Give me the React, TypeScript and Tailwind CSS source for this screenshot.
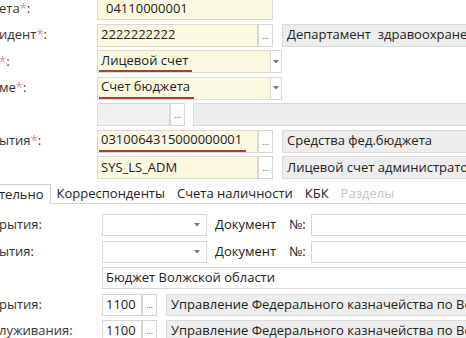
import React from "react"

const font = { fontFamily: '"Open Sans", "Noto Sans", sans-serif' }

function Dots() {
  return (
    <div className="w-[15px] h-full shrink-0 bg-white border border-[#d6d6d6] flex items-end justify-center pb-[6px]">
      <span className="text-[9px] leading-none text-[#555]">…</span>
    </div>
  )
}

function Arrow() {
  return (
    <svg width="6" height="4" viewBox="0 0 6 4">
      <path d="M0 0 L6 0 L3 3.5 Z" fill="#777" />
    </svg>
  )
}

function Label({ text, req }: { text: string; req?: boolean }) {
  return (
    <div className="whitespace-nowrap text-[#333] -ml-[1px]">
      {text}
      {req && <span className="text-[#e98a8a]">*</span>}
      {text !== "" || req ? ":" : ""}
    </div>
  )
}

function Red({ children }: { children: React.ReactNode }) {
  return <span className="border-b-2 border-[#b23a3a] -ml-[2px] pl-[2px] pr-[4px]">{children}</span>
}

const yellow = "bg-[#fcf9e1] border border-[#dadad0] h-full flex items-center whitespace-nowrap overflow-hidden"
const grey = "bg-[#ededed] border border-[#dadada] h-full flex items-center whitespace-nowrap overflow-hidden"

function TopRow({ label, children }: { label: React.ReactNode; children: React.ReactNode }) {
  return (
    <div className="flex items-center h-[23px]">
      <div className="w-[97px] shrink-0">{label}</div>
      <div className="flex items-center h-full flex-1 min-w-0">{children}</div>
    </div>
  )
}

function BotRow({ label, children }: { label: React.ReactNode; children: React.ReactNode }) {
  return (
    <div className="flex items-center h-[22px]">
      <div className="w-[102px] shrink-0">{label}</div>
      <div className="flex items-center h-full flex-1 min-w-0">{children}</div>
    </div>
  )
}

export default function App() {
  return (
    <div className="w-[466px] h-[338px] overflow-hidden bg-white text-[13px] text-[#222]" style={font}>
      <div className="w-[490px]">
        {/* Верхняя часть */}
        <div className="flex flex-col gap-[3.5px] -mt-[3px]">
          <TopRow label={<Label text="ета" req />}>
            <div className={yellow + " w-[176px] pl-[8px]"}>04110000001</div>
          </TopRow>
          <TopRow label={<Label text="идент" req />}>
            <div className={yellow + " w-[161px] pl-[3px]"}>2222222222</div>
            <Dots />
            <div className={grey + " flex-1 ml-[9px] pl-[4px]"}>Департамент&nbsp; здравоохранения Волжской области</div>
          </TopRow>
          <TopRow label={<Label text="" req />}>
            <div className={yellow + " w-[174px] pl-[3px]"}><Red>Лицевой счет</Red></div>
            <div className="w-[11px] h-full bg-white border border-l-0 border-[#d6d6d6] flex items-center justify-center"><Arrow /></div>
          </TopRow>
          <TopRow label={<Label text="ме" req />}>
            <div className={yellow + " w-[174px] pl-[3px]"}><Red>Счет бюджета</Red></div>
            <div className="w-[11px] h-full bg-white border border-l-0 border-[#d6d6d6] flex items-center justify-center"><Arrow /></div>
          </TopRow>
          <TopRow label={<span />}>
            <div className="bg-[#f0f0f0] border border-[#dadada] h-full w-[73px]" />
            <Dots />
            <div className={grey + " flex-1 ml-[8px]"} />
          </TopRow>
          <TopRow label={<Label text="ытия" req />}>
            <div className={yellow + " w-[161px] pl-[3px]"}><Red>0310064315000000001</Red></div>
            <Dots />
            <div className={grey + " flex-1 ml-[9px] pl-[4px]"}>Средства фед.бюджета</div>
          </TopRow>
          <TopRow label={<Label text="" />}>
            <div className={yellow + " w-[161px] pl-[3px]"}>SYS_LS_ADM</div>
            <Dots />
            <div className={grey + " flex-1 ml-[9px] pl-[4px]"}>Лицевой счет администратора</div>
          </TopRow>
        </div>

        {/* Вкладки */}
        <div className="flex items-end h-[22px] mt-[3px] border-b border-[#d9d9d9]">
          <div className="h-[20px] -mb-px bg-white border border-l-0 border-b-0 border-[#d0d0d0] pr-[6px] flex items-center">
            <span className="-ml-[1px]">тельно</span>
          </div>
          <div className="h-[19px] px-[6px] flex items-center">Корреспонденты</div>
          <div className="h-[19px] px-[6px] flex items-center">Счета наличности</div>
          <div className="h-[19px] px-[6px] flex items-center">КБК</div>
          <div className="h-[19px] px-[6px] flex items-center text-[#c4c4c4]">Разделы</div>
        </div>

        {/* Содержимое вкладки */}
        <div className="flex flex-col gap-[4.5px] mt-[10px]">
          <BotRow label={<Label text="рытия" />}>
            <div className="w-[105px] h-full bg-white border border-[#d6d6d6] flex items-center justify-end pr-[6px]"><Arrow /></div>
            <span className="ml-[8px]">Документ</span>
            <span className="ml-[13px]">№:</span>
            <div className="flex-1 h-full ml-[5px] bg-white border border-[#d6d6d6]" />
          </BotRow>
          <BotRow label={<Label text="ытия" />}>
            <div className="w-[105px] h-full bg-white border border-[#d6d6d6] flex items-center justify-end pr-[6px]"><Arrow /></div>
            <span className="ml-[8px]">Документ</span>
            <span className="ml-[13px]">№:</span>
            <div className="flex-1 h-full ml-[5px] bg-white border border-[#d6d6d6]" />
          </BotRow>
          <BotRow label={<span />}>
            <div className="flex-1 h-full bg-white border border-[#d6d6d6] flex items-center pl-[3px] whitespace-nowrap">Бюджет Волжской области</div>
          </BotRow>
          <BotRow label={<Label text="рытия" />}>
            <div className="w-[40px] h-full bg-white border border-[#d6d6d6] flex items-center pl-[3px]">1100</div>
            <Dots />
            <div className={grey + " flex-1 ml-[9px] pl-[4px]"}>Управление Федерального казначейства по Волжской области</div>
          </BotRow>
          <BotRow label={<Label text="луживания" />}>
            <div className="w-[40px] h-full bg-white border border-[#d6d6d6] flex items-center pl-[3px]">1100</div>
            <Dots />
            <div className={grey + " flex-1 ml-[9px] pl-[4px]"}>Управление Федерального казначейства по Волжской области</div>
          </BotRow>
        </div>
      </div>
    </div>
  )
}
